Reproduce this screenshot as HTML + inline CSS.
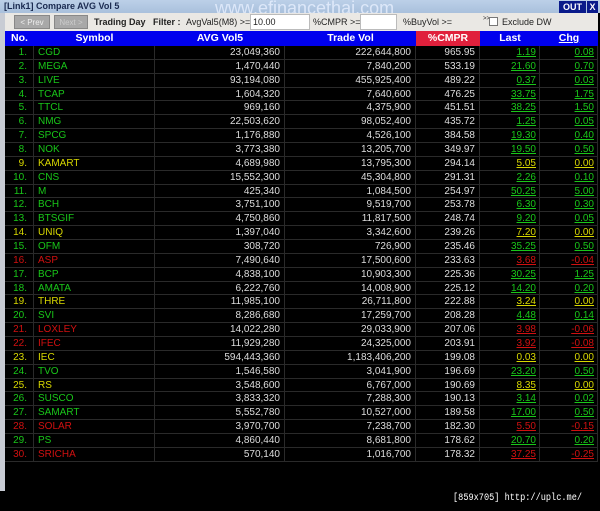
<!DOCTYPE html><html><head><style>
*{margin:0;padding:0;box-sizing:border-box}
body{width:600px;height:511px;background:#000;font-family:"Liberation Sans",sans-serif;position:relative;overflow:hidden}
.title{position:absolute;left:0;top:0;width:600px;height:13px;background:linear-gradient(#bcd0e8,#a9c0dc);font-size:9px;font-weight:bold;color:#1a2a50;padding-left:4px;line-height:13px}
.wm{position:absolute;left:215px;top:-2px;font-size:18px;color:#e8f0ff;opacity:.8;white-space:nowrap}
.out{position:absolute;top:1px;height:12px;background:#0a1a8a;color:#fff;font-size:9px;font-weight:bold;text-align:center;line-height:12px}
.tb{position:absolute;left:4px;top:13px;width:594px;height:18px;background:#eae8e4;font-size:9px;color:#222}
.tb span{position:absolute;top:0;line-height:18px;white-space:nowrap}
.btn{position:absolute;top:2px;height:14px;background:#a8a8a8;color:#eee;font-size:8px;text-align:center;line-height:14px;border:1px solid #888}
.inp{position:absolute;top:1px;height:16px;background:#fff;border:1px solid #bbb;line-height:14px;padding-left:2px}
.lp{position:absolute;left:0;top:13px;width:5px;height:478px;background:#c8ccd4}
.hd{position:absolute;left:5px;top:31px;width:593px;height:15px;background:#0000ee;color:#fff;font-weight:bold;font-size:10.5px}
.hd div,.r div{position:absolute;top:0;height:100%}
.rows{position:absolute;left:5px;top:46px;width:593px}
.r{position:relative;height:13.86px;border-bottom:1px solid #2a2a2a;font-size:10px;line-height:13px}
.r div{border-right:1px solid #2a2a2a}
.c0{left:0;width:29px;text-align:right;padding-right:6px}
.c1{left:29px;width:121px;padding-left:4px}
.c2{left:150px;width:130px;text-align:right;padding-right:4px;color:#ddd}
.c3{left:280px;width:131px;text-align:right;padding-right:4px;color:#ddd}
.c4{left:411px;width:64px;text-align:right;padding-right:4px;color:#ddd}
.c5{left:475px;width:60px;text-align:right;padding-right:3px;text-decoration:underline}
.c6{left:535px;width:58px;text-align:right;padding-right:3px;text-decoration:underline}
.hd div{text-align:center;line-height:15px;padding:0}
.g{color:#19c619}.y{color:#d8d800}.rd{color:#d01010}
.foot{position:absolute;left:453px;top:493px;color:#fff;font-family:"Liberation Mono",monospace;font-size:10px;white-space:nowrap;transform:scaleX(0.86);transform-origin:0 0}
</style></head><body>
<div class="title">[Link1] Compare AVG Vol 5</div>
<div class="wm">www.efinancethai.com</div>
<div class="out" style="left:559px;width:27px">OUT</div>
<div class="out" style="left:587px;width:11px">X</div>
<div class="tb">
<div class="btn" style="left:10px;width:36px">&lt; Prev</div>
<div class="btn" style="left:50px;width:34px;color:#ccc">Next &gt;</div>
<span style="left:90px;font-weight:bold">Trading Day</span>
<span style="left:149px;font-weight:bold">Filter :</span>
<span style="left:182px">AvgVal5(M8) &gt;=</span>
<div class="inp" style="left:246px;width:60px">10.00</div>
<span style="left:309px">%CMPR &gt;=</span>
<div class="inp" style="left:356px;width:37px"></div>
<span style="left:399px">%BuyVol &gt;=</span>
<span style="left:479px;font-size:6px;top:-3px">&gt;&gt;</span>
<div style="position:absolute;left:485px;top:4px;width:9px;height:9px;background:#fff;border:1px solid #777"></div>
<span style="left:498px">Exclude DW</span>
</div>
<div class="lp"></div>
<div class="hd">
<div style="left:0;width:29px">No.</div>
<div style="left:29px;width:121px">Symbol</div>
<div style="left:150px;width:130px">AVG Vol5</div>
<div style="left:280px;width:131px">Trade Vol</div>
<div style="left:411px;width:64px;background:#e0203c">%CMPR</div>
<div style="left:475px;width:60px">Last</div>
<div style="left:535px;width:58px;text-decoration:underline">Chg</div>
</div>
<div class="rows">
<div class="r g"><div class="c0">1.</div><div class="c1">CGD</div><div class="c2">23,049,360</div><div class="c3">222,644,800</div><div class="c4">965.95</div><div class="c5">1.19</div><div class="c6">0.08</div></div>
<div class="r g"><div class="c0">2.</div><div class="c1">MEGA</div><div class="c2">1,470,440</div><div class="c3">7,840,200</div><div class="c4">533.19</div><div class="c5">21.60</div><div class="c6">0.70</div></div>
<div class="r g"><div class="c0">3.</div><div class="c1">LIVE</div><div class="c2">93,194,080</div><div class="c3">455,925,400</div><div class="c4">489.22</div><div class="c5">0.37</div><div class="c6">0.03</div></div>
<div class="r g"><div class="c0">4.</div><div class="c1">TCAP</div><div class="c2">1,604,320</div><div class="c3">7,640,600</div><div class="c4">476.25</div><div class="c5">33.75</div><div class="c6">1.75</div></div>
<div class="r g"><div class="c0">5.</div><div class="c1">TTCL</div><div class="c2">969,160</div><div class="c3">4,375,900</div><div class="c4">451.51</div><div class="c5">38.25</div><div class="c6">1.50</div></div>
<div class="r g"><div class="c0">6.</div><div class="c1">NMG</div><div class="c2">22,503,620</div><div class="c3">98,052,400</div><div class="c4">435.72</div><div class="c5">1.25</div><div class="c6">0.05</div></div>
<div class="r g"><div class="c0">7.</div><div class="c1">SPCG</div><div class="c2">1,176,880</div><div class="c3">4,526,100</div><div class="c4">384.58</div><div class="c5">19.30</div><div class="c6">0.40</div></div>
<div class="r g"><div class="c0">8.</div><div class="c1">NOK</div><div class="c2">3,773,380</div><div class="c3">13,205,700</div><div class="c4">349.97</div><div class="c5">19.50</div><div class="c6">0.50</div></div>
<div class="r y"><div class="c0">9.</div><div class="c1">KAMART</div><div class="c2">4,689,980</div><div class="c3">13,795,300</div><div class="c4">294.14</div><div class="c5">5.05</div><div class="c6">0.00</div></div>
<div class="r g"><div class="c0">10.</div><div class="c1">CNS</div><div class="c2">15,552,300</div><div class="c3">45,304,800</div><div class="c4">291.31</div><div class="c5">2.26</div><div class="c6">0.10</div></div>
<div class="r g"><div class="c0">11.</div><div class="c1">M</div><div class="c2">425,340</div><div class="c3">1,084,500</div><div class="c4">254.97</div><div class="c5">50.25</div><div class="c6">5.00</div></div>
<div class="r g"><div class="c0">12.</div><div class="c1">BCH</div><div class="c2">3,751,100</div><div class="c3">9,519,700</div><div class="c4">253.78</div><div class="c5">6.30</div><div class="c6">0.30</div></div>
<div class="r g"><div class="c0">13.</div><div class="c1">BTSGIF</div><div class="c2">4,750,860</div><div class="c3">11,817,500</div><div class="c4">248.74</div><div class="c5">9.20</div><div class="c6">0.05</div></div>
<div class="r y"><div class="c0">14.</div><div class="c1">UNIQ</div><div class="c2">1,397,040</div><div class="c3">3,342,600</div><div class="c4">239.26</div><div class="c5">7.20</div><div class="c6">0.00</div></div>
<div class="r g"><div class="c0">15.</div><div class="c1">OFM</div><div class="c2">308,720</div><div class="c3">726,900</div><div class="c4">235.46</div><div class="c5">35.25</div><div class="c6">0.50</div></div>
<div class="r rd"><div class="c0">16.</div><div class="c1">ASP</div><div class="c2">7,490,640</div><div class="c3">17,500,600</div><div class="c4">233.63</div><div class="c5">3.68</div><div class="c6">-0.04</div></div>
<div class="r g"><div class="c0">17.</div><div class="c1">BCP</div><div class="c2">4,838,100</div><div class="c3">10,903,300</div><div class="c4">225.36</div><div class="c5">30.25</div><div class="c6">1.25</div></div>
<div class="r g"><div class="c0">18.</div><div class="c1">AMATA</div><div class="c2">6,222,760</div><div class="c3">14,008,900</div><div class="c4">225.12</div><div class="c5">14.20</div><div class="c6">0.20</div></div>
<div class="r y"><div class="c0">19.</div><div class="c1">THRE</div><div class="c2">11,985,100</div><div class="c3">26,711,800</div><div class="c4">222.88</div><div class="c5">3.24</div><div class="c6">0.00</div></div>
<div class="r g"><div class="c0">20.</div><div class="c1">SVI</div><div class="c2">8,286,680</div><div class="c3">17,259,700</div><div class="c4">208.28</div><div class="c5">4.48</div><div class="c6">0.14</div></div>
<div class="r rd"><div class="c0">21.</div><div class="c1">LOXLEY</div><div class="c2">14,022,280</div><div class="c3">29,033,900</div><div class="c4">207.06</div><div class="c5">3.98</div><div class="c6">-0.06</div></div>
<div class="r rd"><div class="c0">22.</div><div class="c1">IFEC</div><div class="c2">11,929,280</div><div class="c3">24,325,000</div><div class="c4">203.91</div><div class="c5">3.92</div><div class="c6">-0.08</div></div>
<div class="r y"><div class="c0">23.</div><div class="c1">IEC</div><div class="c2">594,443,360</div><div class="c3">1,183,406,200</div><div class="c4">199.08</div><div class="c5">0.03</div><div class="c6">0.00</div></div>
<div class="r g"><div class="c0">24.</div><div class="c1">TVO</div><div class="c2">1,546,580</div><div class="c3">3,041,900</div><div class="c4">196.69</div><div class="c5">23.20</div><div class="c6">0.50</div></div>
<div class="r y"><div class="c0">25.</div><div class="c1">RS</div><div class="c2">3,548,600</div><div class="c3">6,767,000</div><div class="c4">190.69</div><div class="c5">8.35</div><div class="c6">0.00</div></div>
<div class="r g"><div class="c0">26.</div><div class="c1">SUSCO</div><div class="c2">3,833,320</div><div class="c3">7,288,300</div><div class="c4">190.13</div><div class="c5">3.14</div><div class="c6">0.02</div></div>
<div class="r g"><div class="c0">27.</div><div class="c1">SAMART</div><div class="c2">5,552,780</div><div class="c3">10,527,000</div><div class="c4">189.58</div><div class="c5">17.00</div><div class="c6">0.50</div></div>
<div class="r rd"><div class="c0">28.</div><div class="c1">SOLAR</div><div class="c2">3,970,700</div><div class="c3">7,238,700</div><div class="c4">182.30</div><div class="c5">5.50</div><div class="c6">-0.15</div></div>
<div class="r g"><div class="c0">29.</div><div class="c1">PS</div><div class="c2">4,860,440</div><div class="c3">8,681,800</div><div class="c4">178.62</div><div class="c5">20.70</div><div class="c6">0.20</div></div>
<div class="r rd"><div class="c0">30.</div><div class="c1">SRICHA</div><div class="c2">570,140</div><div class="c3">1,016,700</div><div class="c4">178.32</div><div class="c5">37.25</div><div class="c6">-0.25</div></div>
</div>
<div class="foot">[859x705] http://uplc.me/</div>
</body></html>
